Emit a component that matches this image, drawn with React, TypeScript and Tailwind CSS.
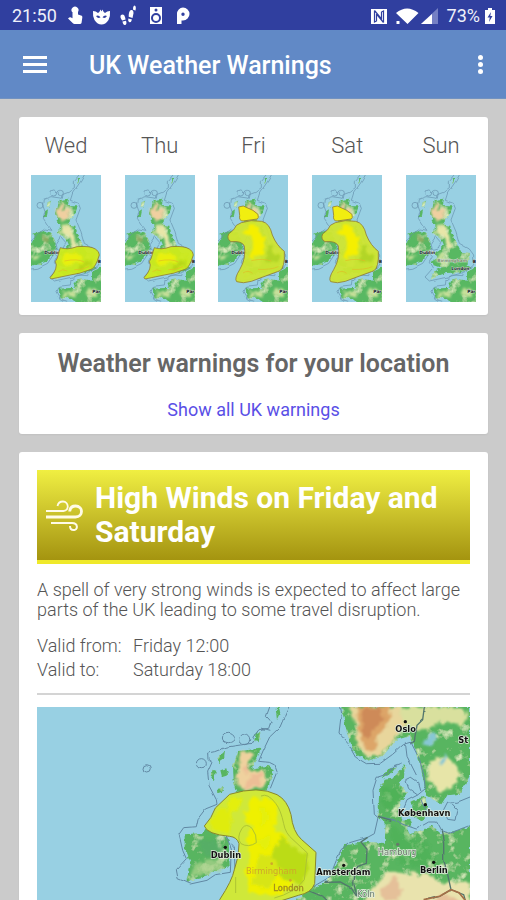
import React from "react";

const SEA = "#98d0e3";

function TerrainFilters() {
  return (
    <svg className="absolute size-0" aria-hidden="true">
      <defs>
        <filter id="coast" x="-5%" y="-5%" width="110%" height="110%">
          <feTurbulence type="fractalNoise" baseFrequency="0.06" numOctaves="3" seed="4" result="n" />
          <feDisplacementMap in="SourceGraphic" in2="n" scale="14" xChannelSelector="R" yChannelSelector="G" result="d" />
          <feTurbulence type="fractalNoise" baseFrequency="0.03" numOctaves="4" seed="9" result="t" />
          <feColorMatrix in="t" type="matrix" values="0 0 0 0 0.80  0 0 0 0 0.90  0 0 0 0 0.58  3 0 0 0 -1.62" result="p" />
          <feComposite in="p" in2="d" operator="in" result="pale" />
          <feMerge result="m">
            <feMergeNode in="d" />
            <feMergeNode in="pale" />
          </feMerge>
          <feGaussianBlur in="m" stdDeviation="1.2" />
        </filter>
        <filter id="hills" x="-20%" y="-20%" width="140%" height="140%">
          <feTurbulence type="fractalNoise" baseFrequency="0.05" numOctaves="3" seed="7" result="n" />
          <feDisplacementMap in="SourceGraphic" in2="n" scale="30" xChannelSelector="R" yChannelSelector="G" result="d" />
          <feGaussianBlur in="d" stdDeviation="2.5" />
        </filter>
        <filter id="outline" x="-5%" y="-5%" width="110%" height="110%">
          <feTurbulence type="fractalNoise" baseFrequency="0.03" numOctaves="2" seed="2" result="n" />
          <feDisplacementMap in="SourceGraphic" in2="n" scale="8" xChannelSelector="R" yChannelSelector="G" />
        </filter>
      </defs>
    </svg>
  );
}

type Area = "none" | "south" | "wide";

function DayMap({ area, label }: { area: Area; label: string }) {
  return (
    <svg viewBox="0 0 210 382" className="block w-[70px]" role="img" aria-label={label}>
      <rect width="210" height="382" fill={SEA} />
      <g filter="url(#coast)" fill="#58b862" stroke="#58b862" strokeWidth="4">
        <path d="M85 78L112 74L108 95L137 96L130 118L112 137L108 150L130 154L142 185L156 215L164 232L190 236L186 262L175 272L192 281L160 290L120 292L75 307L85 290L110 277L85 268L76 262L97 250L88 235L105 222L118 205L105 187L82 172L92 155L82 136L77 118Z" />
        <path d="M0 205L17 192L10 180L35 170L60 178L72 202L66 236L45 259L0 274Z" />
        <path d="M210 280L187 290L184 320L152 312L130 325L135 340L85 343L90 365L130 372L137 382H210Z" />
        <path d="M50 82l10 -5l-5 17l-8 2zM42 112l9 -6l-3 16l-6 2zM138 8l10-4l-9 24z" strokeWidth="0" />
      </g>
      <g filter="url(#hills)">
        <path d="M82 84L100 80L96 104L122 108L114 128L92 138L78 120Z" fill="#f0cfa0" />
        <path d="M86 154L122 154L130 180L136 215L122 226L118 187L90 174Z" fill="#e8e6a8" />
        <path d="M93 242l24 -6l-3 26l-24 -2zM12 240l18 2l-8 10l-18 2zM98 352l30 -2l5 14l-35 0zM160 350l25 -12l18 16l-25 14z" fill="#c7e09a" />
        <path d="M30 180l24 4l5 19l-19 -2z" fill="#8cac62" />
      </g>
      <g filter="url(#outline)" fill="none" stroke="#6590ac" strokeWidth="2">
        <path d="M144 0L130 17L130 38L112 52L96 58L94 70L60 65L37 73L35 90L42 110L37 130L50 150L63 166L42 162L17 178L8 192L0 198M160 0L150 18L125 54L118 76L142 85L148 100L135 135L150 170L160 205L190 222L203 240L203 270L180 290L130 305L70 318L57 306L80 280L70 262L79 245L70 235L50 265L20 280L0 282" />
        <path d="M75 205l14 -20l15 17l-7 17l-18 5zM200 278L175 285L170 302L138 300L120 315L118 330L82 334L75 350L88 372L118 382" />
        <circle cx="68" cy="54" r="9" /><circle cx="89" cy="54" r="8" /><circle cx="27" cy="91" r="9" />
      </g>
      <g fontFamily="DejaVu Sans, sans-serif" fontSize="13" fontWeight="bold" fill="#20242a" stroke="#dfe8df" strokeWidth="2" paintOrder="stroke">
        <text x="40" y="237">Dublin</text>
        <text x="184" y="354">Par</text>
        <text x="200" y="264">B</text>
        {area === "none" && (
          <>
            <text x="94" y="262" fill="#7b9070">Birmingham</text>
            <text x="136" y="286">London</text>
          </>
        )}
      </g>
      {area === "south" && (
        <g>
          <path d="M88 218Q108 226 138 215Q178 212 193 222Q205 229 205 240Q194 278 180 283Q145 297 118 300L60 312L57 308Q83 280 73 259Q79 254 83 234Z" fill="#cdea1c" fillOpacity=".95" stroke="#8f7a35" strokeWidth="2.400" />
          <g filter="url(#hills)"><path d="M94 240l35 -8l28 15l-15 15l-45 11z" fill="#e8f010" /><path d="M145 268l40 -15l-5 22l-36 8z" fill="#b8d716" /></g>
          <path d="M82 290q13 -10 27 -2M100 258q40 -8 60 3M130 284q25 1 44 -9" fill="none" stroke="#e3bd23" strokeWidth="2" />
        </g>
      )}
      {area === "wide" && (
        <g>
          <path d="M62 96Q77 89 87 98Q106 104 120 118Q123 130 118 132L75 138Q62 138 65 121Z" fill="#f1ee10" stroke="#8f7a35" strokeWidth="2.400" />
          <path d="M70 143Q99 133 131 139Q155 144 163 180Q176 212 199 229V252Q196 289 178 290L100 319Q75 327 56 320Q48 311 65 284Q85 250 79 213Q72 197 39 200Q25 192 32 177Q50 165 55 151Z" fill="#cfe530" fillOpacity=".95" stroke="#8f7a35" strokeWidth="2.400" />
          <g filter="url(#hills)"><path d="M95 151l29 5l15 39l0 42l-30 13l-15 -3l11 -31l-5 -33l-24 -12z" fill="#f5ef00" /><path d="M150 200l15 27l21 15l-6 24l-34 -10z" fill="#b2d525" /></g>
          <path d="M100 257q35 -8 60 1M120 283q38 2 61 -8M75 294q15 -10 29 1" fill="none" stroke="#dfbd26" strokeWidth="2" />
        </g>
      )}
    </svg>
  );
}

const cities = [
  { name: "Oslo", x: 1075, y: 74, dot: [1105, 44] },
  { name: "St", x: 1264, y: 109 },
  { name: "København", x: 1083, y: 326, dot: [1165, 293] },
  { name: "Dublin", x: 521, y: 454, dot: [565, 421] },
  { name: "Amsterdam", x: 838, y: 505, dot: [920, 475] },
  { name: "Berlin", x: 1149, y: 497, dot: [1190, 466] },
];

function RegionMap() {
  return (
    <svg viewBox="0 0 1299 900" className="block w-full" role="img" aria-label="Map of the area affected by high winds">
      <rect width="1299" height="900" fill={SEA} />
      <g filter="url(#coast)" fill="#58b560">
        <path d="M603 132L670 125L660 158L642 185L693 176L710 187L692 250L603 262L590 220L588 178Z" />
        <path d="M443 382L498 378L520 340L545 370L575 396L578 480L530 492L498 512L448 522L462 468L443 425Z" />
        <path d="M913 0L930 78L953 140L988 158L1038 146L1078 98L1118 88L1143 148L1157 208L1168 268L1213 292L1230 265L1270 260L1299 205V0Z" />
        <path d="M1105 173L1100 213L1085 225L1110 258L1088 288L1083 318L1102 350L1118 382L1188 358L1213 382L1299 360V900H700L750 600L813 550L868 526L903 462L922 415L988 405L1043 408L1046 348L1025 328L1026 250L1040 218L1066 215Z" />
        <path d="M1125 283l38 -15l10 37l-17 35l-37 -13zM1088 340l32 -5l8 23l-30 5zM545 150l19 -18l-3 24l-18 12zM526 191l10 4l-5 27l-8 -5zM550 190l18 -6l5 20l-18 5zM540 249l21 -11l-5 16l-15 5zM655 82l15 -5l-5 29l-13 -5zM716 5l9 -9l5 23l-10 21z" />
        <path d="M1080 178l-25 30l-21 5l18 -25z" />
      </g>
      <g filter="url(#hills)">
        <path d="M610 135l40 1l-21 46l59 15l-4 39l-73 18l-11 -35z" fill="#efd19e" />
        <path d="M640 204l39 -3l-10 31l-47 16zM615 190l20 -25l-8 39z" fill="#ecb693" opacity=".7" />
        <path d="M935 0H1090L1115 50L1072 95L1035 144L988 148L956 113L960 60Z" fill="#e8d69c" />
        <path d="M960 0H1065L1046 64L1016 91L1022 132L985 128L965 70Z" fill="#dda568" />
        <path d="M975 8l53 -7l15 35l-31 25l-10 35l-26 -15z" fill="#cb8355" opacity=".8" />
        <path d="M1085 0H1250L1295 25L1280 55L1220 46L1180 65L1130 70L1095 40Z" fill="#d9e09e" />
        <path d="M1175 165l55 -20l40 42l-15 51l-47 20l-35 -42z" fill="#e7e5a8" />
        <path d="M1010 540l50 -53l50 15l50 -5l45 27l94 4V900H920L980 590Z" fill="#e9e3ad" />
        <path d="M1030 550l45 -43l20 46l-19 30l-35 -5zM1190 580l29 -18l42 10l38 40z" fill="#e5c099" />
        <path d="M460 480l60 -25l42 8l-15 29l-55 9l-25 13z" fill="#aad18b" opacity=".75" />
        <path d="M480 395l60 5l22 31l-44 15l-30 -15z" fill="#56ae66" />
        <path d="M1052 345l50 35l70 35l22 50l-54 16l-64 -26z" fill="#4bb056" opacity=".6" />
        <path d="M1036 245l35 -6l26 20l-30 47l-33 -6z" fill="#4bb056" opacity=".7" />
        <path d="M1160 98l17 -19l25 10l-18 26l-25 3zM1210 165l17 -27l5 5l-18 30z" fill="#87c7d4" />
      </g>
      <g fill="none" stroke="#6188a3" strokeWidth="3" filter="url(#outline)">
        <path d="M698 0L688 28L702 43L695 64L666 68L648 90L650 108L610 114L570 120L533 134L512 138L513 158L525 166L512 195L516 236L538 278L540 292L505 306L483 335L478 359L440 362L426 382L437 430L448 455L418 488L423 515L460 531L510 520L535 503L580 496L583 423L568 390" />
        <path d="M755 0L729 60L698 90L678 132L665 163L697 166L713 174L720 194L700 244M674 63L700 70M583 410L592 420L594 498" />
        <path d="M908 0L912 28L906 78L933 110L955 150L988 170L1030 169L1067 142L1099 113L1122 106L1148 158L1161 208L1165 245L1142 264L1115 245L1106 218L1122 210L1145 226L1152 251M1105 106L1110 148L1138 204M1094 168L1067 177L1054 200L1020 211L1008 250L1012 322L1023 332L1012 380L992 391L938 407L912 428L898 460L878 510L820 544" />
        <path d="M1023 328L1070 338L1098 352L1138 366L1175 345L1199 345L1213 371L1235 380L1299 355M1142 264L1110 281L1098 310M1152 275L1166 310M1299 270L1260 286L1232 285L1220 308L1232 337L1254 340L1260 310L1242 290" />
        <circle cx="329" cy="184" r="11" />
        <ellipse cx="574" cy="93" rx="18" ry="14" />
        <ellipse cx="623" cy="97" rx="15" ry="16" />
        <circle cx="493" cy="170" r="15" />
      </g>
      <g fill="none" stroke="#53766d" strokeWidth="4" filter="url(#outline)">
        <path d="M1162 0L1157 38L1140 55L1132 103L1122 108M1023 328L1063 340M992 391L972 405L990 427L988 469L957 480L950 529L960 568M1213 371L1220 405L1220 459L1231 498L1242 548L1208 568L1160 580M1242 548L1280 563L1288 590M813 550L860 570L880 590M862 526L910 525L943 543L958 567" />
      </g>
      <path d="M1160 578L1208 568L1242 548L1266 557L1287 583" fill="none" stroke="#a46f47" strokeWidth="5" />
      <g>
        <path d="M578 262Q665 235 720 263Q751 279 762 323Q768 375 793 397L837 436L833 530Q823 558 784 565L730 582L675 650L530 660L522 620L548 578Q586 520 592 488Q607 448 606 410Q600 390 578 388Q510 382 502 357Q524 334 535 303Z" fill="#cfe83a" />
        <g filter="url(#hills)">
          <path d="M642 273L716 278L724 322L713 359L749 389L771 443L750 481L772 530L728 566L637 558L626 500L641 446L625 395L650 361L621 324Z" fill="#eff004" />
          <path d="M518 343l28 -38l37 5l-4 62l-44 5z" fill="#dfec0d" />
          <path d="M735 391l27 22l44 32l10 41l-22 47l-56 -15l-20 -53l-21 -15z" fill="#bbdc13" />
          <path d="M668 447l43 5l25 42l-41 48l-53 -10z" fill="#d7e512" />
          <path d="M570 280l48 -9l-8 30l-32 30zM666 307l25 -9l11 42l-29 18zM658 396l37 -8l9 30l-39 5z" fill="#e4ef08" />
        </g>
        <path d="M615 364q13 -17 30 0q15 19 13 43q-23 16 -46 3q-15 -17 3 -46M596 510v48M672 267q20 -10 44 22q16 21 24 61q5 29 28 48l43 40l-9 80q-30 40 -90 55" fill="none" stroke="#aec432" strokeWidth="3" />
        <path d="M578 262Q665 235 720 263Q751 279 762 323Q768 375 793 397L837 436L833 530Q823 558 784 565L730 582L675 650L530 660L522 620L548 578Q586 520 592 488Q607 448 606 410Q600 390 578 388Q510 382 502 357Q524 334 535 303Z" fill="none" stroke="#88862c" strokeWidth="3" />
      </g>
      <g fontFamily="DejaVu Sans, sans-serif" fontSize="25" fontWeight="bold" fill="#111" stroke="#e3eee0" strokeWidth="4" paintOrder="stroke">
        {cities.map((c) => (
          <g key={c.name}>
            {c.dot && <circle cx={c.dot[0]} cy={c.dot[1]} r="5" strokeWidth="0" />}
            <text x={c.x} y={c.y}>{c.name}</text>
          </g>
        ))}
      </g>
      <g fontFamily="DejaVu Sans, sans-serif" fontSize="25" fill="#68786a" stroke="#e3eee0" strokeWidth="4" paintOrder="stroke">
        <circle cx="1082" cy="412" r="5" strokeWidth="0" />
        <text x="1022" y="444">Hamburg</text>
        <text x="960" y="571">Köln</text>
      </g>
      <g fontFamily="DejaVu Sans, sans-serif" fontSize="25" fill="#cfa72b">
        <text x="627" y="500">Birmingham</text>
        <text x="709" y="552" fill="#a28c21" stroke="#a28c21" strokeWidth="1">London</text>
        <circle cx="704" cy="470" r="4" /><circle cx="760" cy="520" r="4" />
      </g>
    </svg>
  );
}

function StatusBar() {
  return (
    <div className="flex h-[30px] shrink-0 items-center justify-between bg-[#303f9f] pt-0.5 pr-2.5 pl-3 text-lg text-[#eef0fa]">
      <div className="flex items-center">
        <span className="w-[55px]">21:50</span>
        <svg viewBox="0 0 130 24" className="h-6 w-[130px]" fill="#fff" aria-hidden="true">
          <path d="M5 8a3.500 3.500 0 1 1 6 0v2.500l3 1c1.200.4 1.500 1 1.300 2.200L14.500 19q-.3 1-1.500 1H7.500q-1 0-1.600-.8L1 14.500l1.200-1q.6-.4 1.300-.2L5.500 14.300V8z" />
          <path fillRule="evenodd" d="M26 7q3 0 5 2 1.500-.5 2.500-3.500l1 2 1-2Q36.500 8.500 38 9q2-2 5-2 .5 5-1.500 9-3 4.500-7 4.500T27.500 16q-2-4-1.500-9zM29 12q2 3 4.500 1.200Q31.500 10.500 29 12zM40 12q-2 3-4.500 1.200Q37.500 10.500 40 12z" />
          <path d="M54 11q3-1.500 4 2l.6 2.500-3.500 1Q52.500 13 54 11zM55.500 17.500l3.500-.8q1.200 3.500-.8 4.200-2.200.5-2.700-3.400zM64 6q2.500-.5 2.500 3.200L65.500 14l-3.800-1.200Q61.500 7 64 6zM61.300 14.500l3.700 1q-.7 3-2.600 2.700-1.800-.6-1.100-3.700zM67.500 1.500q2 .3 1 5l-2.400-.8q-.3-3.500 1.400-4.200z" />
          <path fillRule="evenodd" d="M83 3h12v17H83zM89 9a5 5 0 1 0 0 10 5 5 0 0 0 0-10zM89 4.500a1.500 1.500 0 1 0 0 3 1.500 1.500 0 0 0 0-3z" />
          <circle cx="89" cy="14" r="3" />
          <path fillRule="evenodd" d="M116 3.500a6.500 6.500 0 1 1 0 13h-1.500V20H110V10a6.500 6.500 0 0 1 6-6.500zM116 8.500a1.700 1.700 0 1 0 0 3.400 1.700 1.700 0 0 0 0-3.400z" />
        </svg>
      </div>
      <div className="flex items-center gap-2">
        <svg viewBox="0 0 68 20" className="h-5 w-[68px]" aria-hidden="true">
          <path d="M0 3h16v15H0z" fill="#fff" />
          <path d="M3.500 4.500V16l2-1V8l7 8.500M12.500 16.500V5l-2 1v7L3.500 4.500" fill="none" stroke="#303f9f" strokeWidth="1.200" />
          <path d="M25 7Q36 -2 47.500 7L36.500 18zM25.500 15h3v3h-3z" fill="#fff" />
          <path d="M50 18L67 2V18z" fill="#7580c4" />
          <path d="M50 18L61 8V18z" fill="#fff" />
        </svg>
        <div className="flex items-center gap-1">
          <span>73%</span>
          <svg viewBox="0 0 12 18" className="h-[18px] w-3" aria-hidden="true">
            <path d="M1 3h3V1h4v2h3v14H1z" fill="#fff" />
            <path d="M7 5L3.500 10.500h2.300L5 15l3.500-6H6.300z" fill="#303f9f" />
          </svg>
        </div>
      </div>
    </div>
  );
}

const days: { name: string; area: Area }[] = [
  { name: "Wed", area: "south" },
  { name: "Thu", area: "south" },
  { name: "Fri", area: "wide" },
  { name: "Sat", area: "wide" },
  { name: "Sun", area: "none" },
];

export default function App() {
  return (
    <div className="flex h-screen flex-col overflow-hidden bg-[#cbcbcb] font-['Roboto',sans-serif] text-[#666]">
      <TerrainFilters />
      <StatusBar />
      <header className="flex h-[69px] shrink-0 items-center justify-between border-b border-[#7292c0] bg-[#6189c6] px-[23px] text-white">
        <div className="flex items-center gap-[42px]">
          <button aria-label="Open menu" className="flex w-6 flex-col gap-1">
            <span className="h-[3px] bg-white" />
            <span className="h-[3px] bg-white" />
            <span className="h-[3px] bg-white" />
          </button>
          <h1 className="pt-1 text-[25px] leading-8 font-medium">UK Weather Warnings</h1>
        </div>
        <button aria-label="More options" className="flex flex-col gap-0.5">
          <span className="size-[5px] rounded-full bg-white" />
          <span className="size-[5px] rounded-full bg-white" />
          <span className="size-[5px] rounded-full bg-white" />
        </button>
      </header>
      <main className="flex min-h-0 flex-1 flex-col gap-[18px] overflow-y-auto py-[18px] pr-[18px] pl-[19px] [scrollbar-width:none]">
        <section className="grid shrink-0 grid-cols-5 rounded-[3px] bg-white pt-3 pb-[13px] shadow-xs">
          {days.map((d) => (
            <button key={d.name} className="flex flex-col items-center gap-3">
              <span className="text-[22px] leading-[34px] font-light text-[#555]">{d.name}</span>
              <DayMap area={d.area} label={`Warnings map for ${d.name}`} />
            </button>
          ))}
        </section>
        <section className="flex shrink-0 flex-col items-center gap-4 rounded-[3px] bg-white px-4 pt-[15px] pb-[10px] text-center shadow-xs">
          <h2 className="text-[25px] leading-8 font-semibold">Weather warnings for your location</h2>
          <a href="#all" className="text-lg leading-7 text-[#5a4fe6]">Show all UK warnings</a>
        </section>
        <article className="shrink-0 rounded-[3px] bg-white p-[18px] shadow-xs">
          <div className="flex items-center gap-3 border-b-4 border-[#efe92a] bg-linear-to-b from-[#f0ef42] to-[#a4940f] px-[9px] py-[11px] text-white">
            <svg viewBox="0 0 37 32" className="h-8 w-[37px] shrink-0" fill="none" stroke="#fffbe6" strokeWidth="2.200" aria-hidden="true">
              <path d="M0 12h17.500c6 0 5.500-9.500-.5-9.500-3 0-5 1.700-5.500 4.500" strokeWidth="1.800" />
              <path d="M0 18h29.500c8 0 8-11 0-11-3.500 0-5.500 2-5.800 5.500" strokeWidth="2.800" />
              <path d="M5 24h21c6.500 0 6 7.500 1.500 7-2.500 0-3.500-1.500-3.500-4" strokeWidth="2" />
            </svg>
            <h3 className="text-[30px] leading-[34px] font-bold">High Winds on Friday and Saturday</h3>
          </div>
          <p className="pt-4 text-lg leading-5 font-light text-[#555]">
            A spell of very strong winds is expected to affect large parts of the UK leading to some travel disruption.
          </p>
          <dl className="grid grid-cols-[96px_1fr] border-b-2 border-[#d4d4d4] pt-[14px] pb-[11px] text-lg leading-6 font-light text-[#555]">
            <dt>Valid from:</dt>
            <dd>Friday 12:00</dd>
            <dt>Valid to:</dt>
            <dd>Saturday 18:00</dd>
          </dl>
          <div className="pt-3">
            <RegionMap />
          </div>
        </article>
      </main>
    </div>
  );
}
